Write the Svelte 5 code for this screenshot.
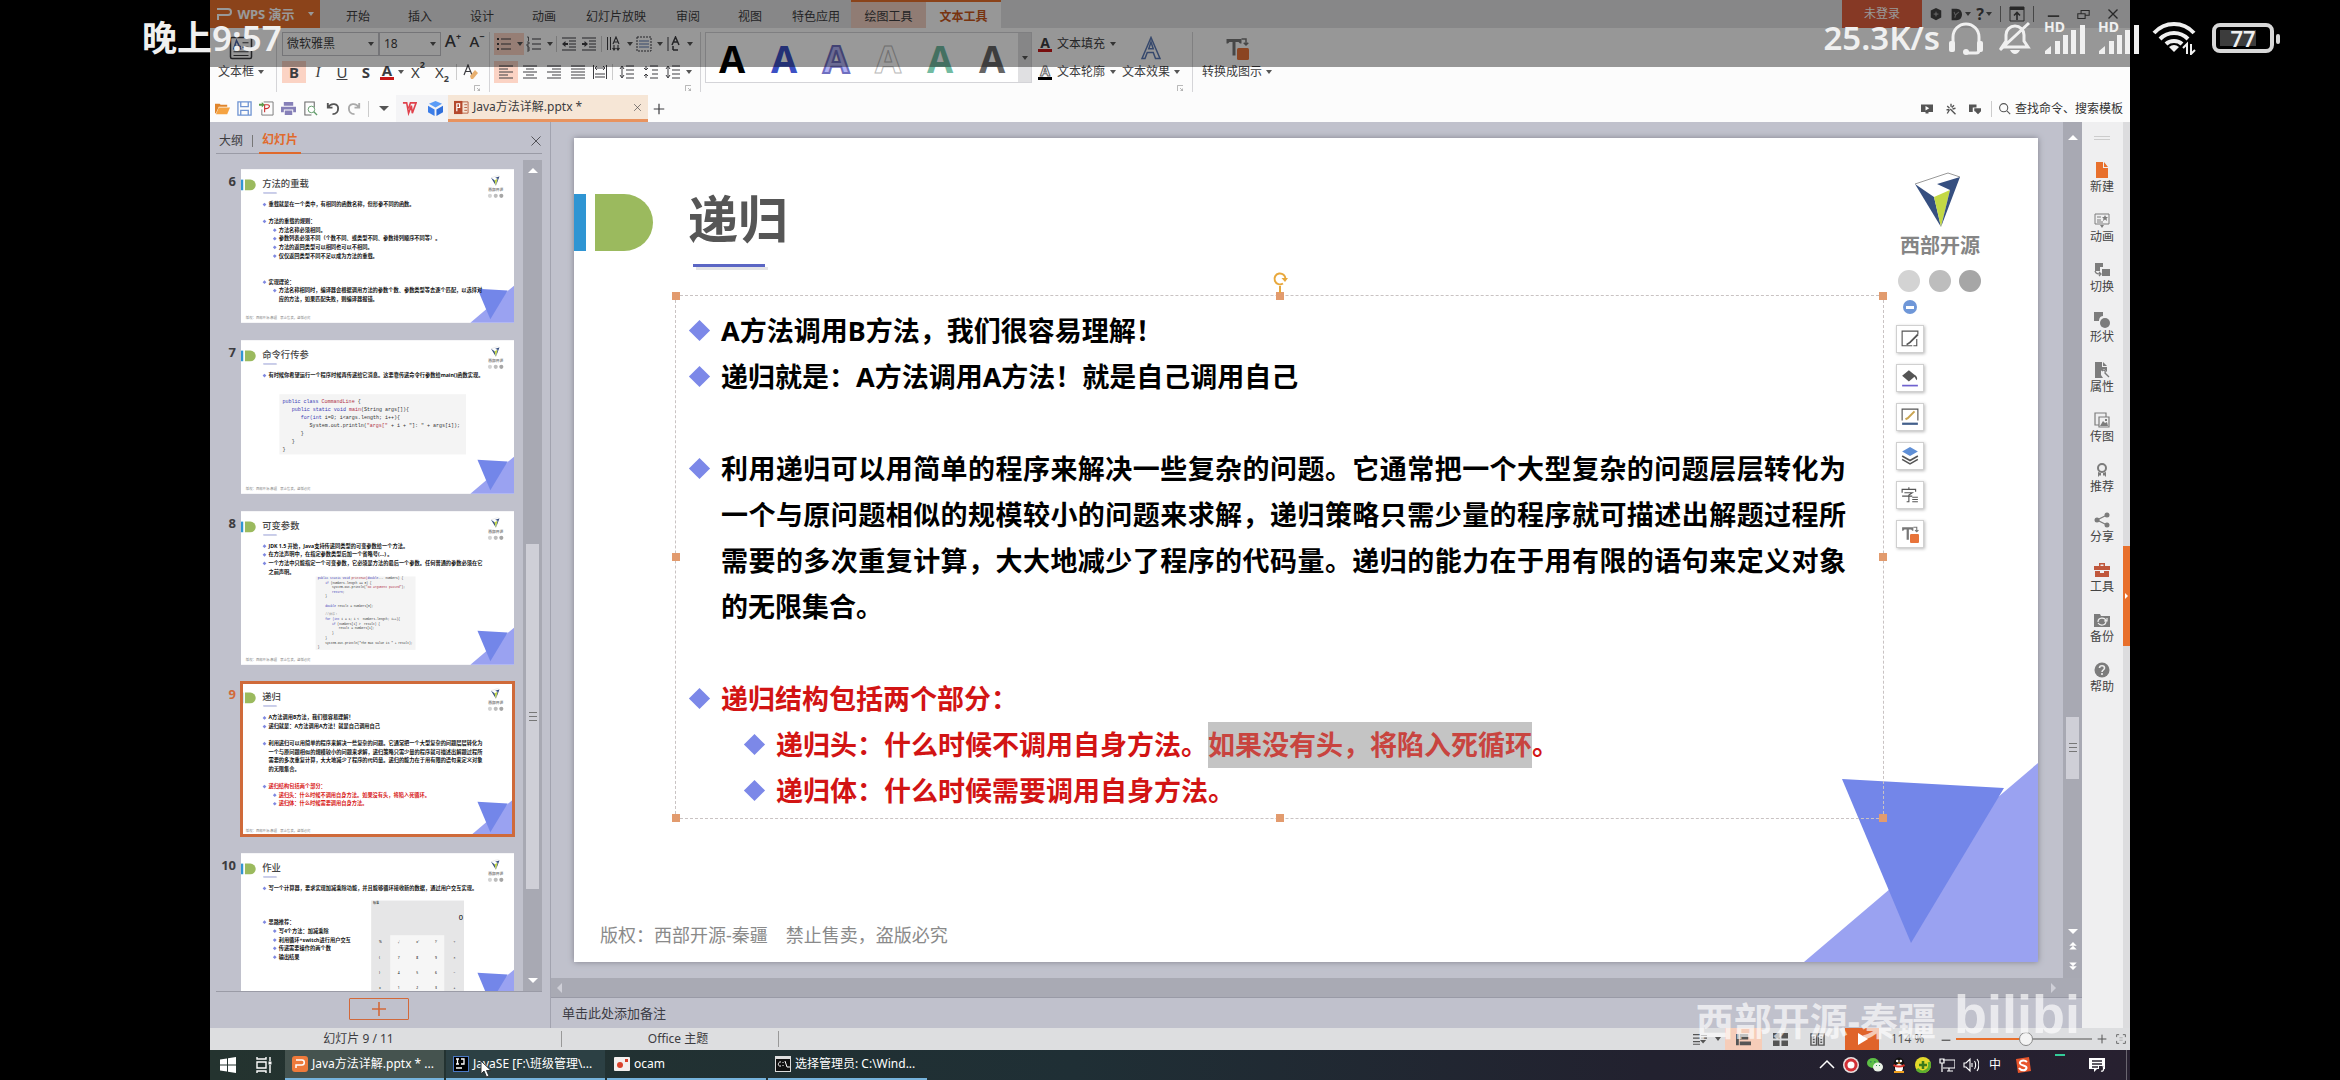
<script>
  const stroke = (d, w = 1, c = 'currentColor') =>
    `<path d="${d}" fill="none" stroke="${c}" stroke-width="${w}"/>`;
  const fill = (d, c = 'currentColor') => `<path d="${d}" fill="${c}"/>`;

  const icons = {
    textbox:
      '<rect x="1" y="1" width="14" height="14" rx="1" fill="none" stroke="currentColor"/>' +
      stroke('M8 9 5 3 3 9M4 7h4', 1, '#4a64a8') + stroke('M9 4.5h4M9 7.5h4M3 10.5h10M3 13h10', 0.7),
    bullets: fill('M1 2h2v2H1zM1 7h2v2H1zM1 12h2v2H1z') + stroke('M5 3h10M5 8h10M5 13h10'),
    numbers: stroke('M1 1h1.5v4M1 6h2v2H1v2h2M1 11h2v4H1M1 13h2', 0.8) + stroke('M6 3h9M6 8h9M6 13h9'),
    outdent: stroke('M1 2h14M8 5h7M8 8h7M8 11h7M1 14h14') + fill('M1 8l3.5-3v2H7v2H4.5v2z'),
    indent: stroke('M1 2h14M8 5h7M8 8h7M8 11h7M1 14h14') + fill('M7 8 3.500 5v2H1v2h2.500v2z'),
    textdir: stroke('M1.500 1v13M4.500 1v13') + stroke('M7 8l3-7 3 7M8 6h4M8 9v5M12 9v5M6.500 12 8 14l1.500-2M10.500 12l1.500 2 1.500-2', 1.1),
    alignbox: '<rect x="1" y="1" width="14" height="14" fill="none" stroke="currentColor" stroke-dasharray="2 1"/>' + stroke('M3 5h10M3 8h10M3 11h10', 1, '#5a78b0'),
    spacing: stroke('M2 1v14') + stroke('M6 9l3.500-8L13 9M7 6h5M7 14h5M7 10v4', 1.5),
    left: stroke('M1 2h14M1 5h9M1 8h14M1 11h9M1 14h14'),
    center: stroke('M1 2h14M4 5h8M1 8h14M4 11h8M1 14h14'),
    right: stroke('M1 2h14M6 5h9M1 8h14M6 11h9M1 14h14'),
    justify: stroke('M1 2h14M1 5h14M1 8h14M1 11h14M1 14h14'),
    distribute: stroke('M1.500 1v14M14.500 1v14M3 4h10M3 10h10M3 13h10M5 2 3 4l2 2M11 2l2 2-2 2'),
    lines: stroke('M3 3v10M1 5l2-3 2 3M1 11l2 3 2-3M7 2h8M7 6h8M7 10h8M7 14h8'),
    para: stroke('M3 2v4M1 4l2 2 2-2M3 14v-4M1 12l2-2 2 2M7 2h8M9 6h6M9 10h6M7 14h8'),
    eraser: stroke('M1 11 5 1l4 10M2.500 7.500h5', 1.2) + fill('M7 12l5-6 3 3-5 6H8z', '#e8b070'),
    launcher: stroke('M3 14V3h11M9 13h4V9M8 8l5 5'),
    effect: stroke('M2 15 8 1l6 14h-3l-1.500-4h-4L4 15zM6.500 8.500h3L8 4z', 1, '#5b79b5'),
    convert: fill('M1 2h10v3h-1l-1-1H7v9H5V4H3L2 5H1z', '#777') + stroke('M11 2h3v4M12.500 4.500 14 6l1.500-1.500', 1, '#777') + '<rect x="8" y="8" width="8" height="8" rx="1" fill="#e8743a"/>',
    folder: fill('M0 3h5l1 1h7v2H4l-3 7H0z', '#e0852c') + fill('M4 7h12l-3 7H1z', '#f5a342'),
    save: stroke('M1 1h14v14H1zM4 1v5h8V1M4 15v-5h8v5', 1.4, '#6f94d2'),
    pdf: stroke('M5 1h10v14H3V9', 1, '#777') + stroke('M6 12V4h3c4 0 2 5-3 4', 1.2, '#c33') + fill('M0 3h3V1l3 3-3 3V5H0z', '#5a9a4a'),
    print: fill('M3 1h10v4H3zM0 6h16v6h-3V9H3v3H0zM4 10h8v5H4z', '#8680b8'),
    preview: stroke('M12 7V1H2v14h7', 1.1, '#666') + '<circle cx="9" cy="9" r="3.500" fill="#fff" stroke="#5f9a68"/>' + stroke('M11.500 11.500 15 15', 1.4, '#5f9a68'),
    undo: stroke('M3 2v5h5M3 7c4-6 11-4 11 1 0 3-2 6-6 6', 2, '#555'),
    redo: stroke('M13 2v5H8M13 7C9 1 2 3 2 8c0 3 2 6 6 6', 2, '#aaa'),
    wps: stroke('M1 2h4l2 11 3-8 1 8 4-11H9L7 8', 1.7, '#e0414c'),
    cube: fill('M8 0l7 3-7 4-7-4z', '#5b9cf6') + fill('M0 5l7 4v7l-7-4z', '#3b7de8') + fill('M16 5 9 9v7l7-4z', '#2f6fdc'),
    ppt: stroke('M8 2h7v12H8M11 5h3M11 8h3M11 11h3', 1, '#b65f40') + fill('M0 1h9v14H0z', '#b5492c') + stroke('M3 12V4h3v4H3', 1.3, '#fff'),
    gear: fill('M8 1l6 3v8l-6 3-6-3V4z', '#444') + fill('M8 4.500l1 2.500 2.500 1L9 9l-1 2.500L7 9 4.500 8 7 7z', '#999'),
    docer: fill('M2 1h6c9 0 9 14 0 14H2z', '#444') + stroke('M6 12c0-4 2-5 5-7M7 10 5 5', 1.3, '#999'),
    upbox: stroke('M1 1h14v14H1z') + fill('M1 1h14v3H1z') + stroke('M8 14V7M5 9.500l3-3 3 3', 1.6),
    restore: stroke('M1 7h9v6H1zM5 7V3h10v6h-5', 1.3),
    min: stroke('M1 10h14', 2),
    close: stroke('M2 2l12 12M14 2 2 14', 1.8),
    thinclose: stroke('M2 2l12 12M14 2 2 14', 1.1),
    plus: stroke('M8 1v14M1 8h14', 1.6),
    present: fill('M0 2h16v10h-6v2H6v-2H0z') + fill('M6 4l5 3-5 3z', '#fff'),
    wand: stroke('M8 1v4M3 4l3 3M2 9h4M7 8l7 7M12 3 9 6M6 9l-3 5M10 8l4-1', 1.8),
    note: fill('M0 2h10v4H5v6H0zM7 7h9v4l-4 4-4-4H7z'),
    search: '<circle cx="7" cy="7" r="5" fill="none" stroke="currentColor" stroke-width="1.300"/>' + stroke('M11 11l4 4', 1.3),
    newfile: fill('M2 0h7v6h5v10H2zM10 0l4 5h-4z', '#e8702c'),
    anim: stroke('M1 2h14v10H1zM3 5h4M3 8h4M3 10h6') + fill('M11 3l1 2h2l-1.500 1.500L13 9l-2-1.500L9 9l.500-2.500L8 5h2zM6 13h4l-2 3z'),
    trans: fill('M1 1h8v4H6v4H1zM8 7h8v7H8z') + stroke('M1 9c1 3 3 3 6 3M5 10l2 2-2 2', 1.3),
    shape: fill('M0 0h9v4C6 4 5 7 5 9H0z') + '<circle cx="11" cy="11" r="5" fill="currentColor"/>',
    prop: fill('M1 0h7v5h5v5l-3-3-3 2v4l2 3H1zM9 0l4 4H9z') + stroke('M8 9c2-2 4 0 3 2l4 4', 1.3),
    pic: stroke('M5 13H1V1h11v4M5 5h10v10H5z', 1.2) + fill('M6 14l3-5 2 2 2-1 1 4zM11 7h2v2h-2z'),
    medal: '<circle cx="8" cy="6" r="4" fill="none" stroke="currentColor" stroke-width="2"/>' + fill('M4 10l3 1v3l-1-1-2 2zM12 10l-3 1v3l1-1 2 2z'),
    share: '<circle cx="3" cy="8" r="2.500" fill="currentColor"/><circle cx="13" cy="3" r="2.500" fill="currentColor"/><circle cx="13" cy="13" r="2.500" fill="currentColor"/>' + stroke('M13 3 3 8l10 5', 1.3),
    toolbox: fill('M5 1h6v3h5v4H0V4h5zM6.500 2.500V4h3V2.500zM1 9h5v2h4V9h5v6H1z', '#c0573c'),
    backup: fill('M0 2h6l1 2h9v11H0z') + stroke('M4 10c0-5 7-5 8-1M12 9c0 5-6 5-8 2M10 9h3V6', 1.2, '#eee'),
    help: '<circle cx="8" cy="8" r="7.500" fill="currentColor"/>' + stroke('M5.500 6c0-3 5-3 5 0 0 2-2.500 2-2.500 4M8 11v2', 1.6, '#eee'),
    pen: stroke('M10 14H1V1h14v3M14 8v6h-3') + stroke('M15 4 8 11l-3 2', 1.6),
    bucket: fill('M1 6l6-5 6 5-6 5zM12 5c2 1 3 3 2 5-1-1-1-2-2-3z') + fill('M1 14h14v1.500H1z', '#6f62cf'),
    outline: stroke('M1 11V1h14v10') + stroke('M12 3 6 9l-2 1', 1.8, '#c9a450') + fill('M1 13h14v2H1z', '#44608c'),
    layers: fill('M8 0l7 4-7 4-7-4z', '#5f8fd6') + stroke('M1 8l7 4 7-4M1 11l7 4 7-4', 1.4),
    glyphopt: stroke('M7 1v2M1 6V3h12v2M3 6h7L7 8v6H5M1 9h9M10 10h5M10 12h5M10 14h5'),
    outlineview: stroke('M0 3h8M0 7h8M0 11h8M0 14h8M9 4h7M9 7h7', 1.3) + fill('M8 9h7l-3.500 4z'),
    normal: fill('M0 2h3v12H0zM4 2h9v6H4zM4 10h12v4H4z'),
    grid: fill('M0 1h7v6H0zM9 1h7v6H9zM0 9h7v6H0zM9 9h7v6H9z'),
    book: stroke('M1 2h6v12H1zM9 2h6v12H9zM3 5h2M3 8h2M3 11h2M11 5h2M11 8h2M11 11h2', 1.5),
    play: fill('M4 2l10 6-10 6z', '#fff'),
    fit: stroke('M1 5V1h4M11 1h4v4M15 11v4h-4M5 15H1v-4M6 6h1M9 6h1M6 10h1M9 10h1', 1.3),
    windows: fill('M0 2.500 7 1.500v6H0zM8 1.300 16 0v7.500H8zM0 8.500h7v6L0 13.500zM8 8.500h8V16l-8-1.300z'),
    taskview: stroke('M1 0v2h9V0M1 5h9v6H1zM1 16v-2h9v2M14 0v4M14 8v8', 1.4) + fill('M12.500 4.500h3v3h-3z'),
    wpp: '<rect width="16" height="16" rx="3" fill="#ee7a3b"/>' + stroke('M4 12V9h6c3 0 3-5 0-5H4', 1.5, '#fff'),
    idea: '<rect x=".500" y=".500" width="15" height="15" fill="#000" stroke="#4a78c4"/>' + stroke('M3 3h3M4.500 3v5M3 8h3M8 3h3v5H8M3 12h6', 1.3, '#fff'),
    ocam: '<rect y="1" width="16" height="14" rx="1" fill="#f4f0ee"/><circle cx="6" cy="9" r="3" fill="#d9432c"/>' + fill('M11 3h3v3h-3z', '#d9432c'),
    cmd: '<rect x=".500" y=".500" width="15" height="15" fill="#111" stroke="#ddd"/>' + fill('M0 0h16v3H0z', '#ddd') + stroke('M6 6c-3-1-4 5 0 4M8 6v1M8 9v1M10 5l2 6M12 11h3', 1, '#fff'),
    chevron: stroke('M1 11l7-7 7 7', 1.5),
    rec: '<circle cx="8" cy="8" r="8" fill="#e8e0e0"/><circle cx="8" cy="8" r="6.500" fill="#d22f35"/><circle cx="8" cy="8" r="3.500" fill="#fff"/>',
    wechat: '<ellipse cx="6" cy="6" rx="6" ry="5" fill="#5dbf45"/><ellipse cx="11" cy="10" rx="5" ry="4.500" fill="#e9f2e5"/>' + fill('M3 4h1.500v1.500H3zM7 4h1.500v1.500H7zM9 8h1v1H9zM12 8h1v1h-1z', '#385'),
    qq: '<ellipse cx="8" cy="8" rx="5.500" ry="7.500" fill="#111"/><ellipse cx="8" cy="11" rx="4" ry="4" fill="#fff"/><circle cx="6.200" cy="4" r="1.300" fill="#fff"/><circle cx="9.800" cy="4" r="1.300" fill="#fff"/>' + fill('M3 7c3 2 7 2 10 0l1 2c-4 2-8 2-12 0z', '#d8342c') + fill('M3 14h10v2H3zM6 5.500h4L8 7z', '#f0a020'),
    guard: '<circle cx="8" cy="8" r="8" fill="#e3d92b"/>' + stroke('M2 12A7 7 0 0 0 14 5', 3, '#5cae2e') + stroke('M8 4v8M4 8h8', 2.5, '#3a7a1c'),
    network: stroke('M4 3h12v8H4M8 14h6M10 11v3M1 2h4v4H1zM3 6v9', 1.2),
    sound: stroke('M1 6h2l4-4v12l-4-4H1zM9 6v4M11.500 4c1.500 2 1.500 6 0 8M14 2c2.500 3 2.500 9 0 12', 1.1),
    sogou: fill('M1 2l13-2 2 14-13 2z', '#e8552b') + stroke('M12 5C9 2 4 4 5 6.500S12 8 11.500 11 6 14 4 11', 2, '#fff'),
    notice: fill('M0 1h16v11H8l-3 3v-3H0z') + stroke('M3 4h10M3 7h10M3 10h6', 1.3, '#2a2430') + fill('M10 9h5v5h-5z', '#2a2430') + stroke('M12 14c3 1 3-3 2-5', 1.3),
    pgup: fill('M8 0l6 6H2zM8 6l6 6H2z', '#fff'),
    pgdown: fill('M8 16l6-6H2zM8 10l6-6H2z', '#fff')
  };

  const tabs = [
    { t: '开始', w: 62 }, { t: '插入', w: 62 }, { t: '设计', w: 62 }, { t: '动画', w: 62 },
    { t: '幻灯片放映', w: 82 }, { t: '审阅', w: 62 }, { t: '视图', w: 62 }, { t: '特色应用', w: 70 }
  ];
  const quick = ['folder', 'save', 'pdf', 'print', 'preview', 'undo', 'redo'];
  const artStyles = ['black', 'blue', 'violet', 'hollow', 'green', 'fade'];
  const side = [
    ['newfile', '新建'], ['anim', '动画'], ['trans', '切换'], ['shape', '形状'], ['prop', '属性'],
    ['pic', '传图'], ['medal', '推荐'], ['share', '分享'], ['toolbox', '工具'], ['backup', '备份'], ['help', '帮助']
  ];
  const floating = [
    ['pen', '样式'], ['bucket', '填充'], ['outline', '轮廓'], ['layers', '叠放'], ['glyphopt', '字体'], ['convert', '转换']
  ];
  const tasks = [
    { icon: 'wpp', t: 'Java方法详解.pptx * ...', on: true },
    { icon: 'idea', t: 'JavaSE [F:\\班级管理\\...', on: true },
    { icon: 'ocam', t: 'ocam' },
    { icon: 'cmd', t: '选择管理员: C:\\Wind...' }
  ];
  const tray = ['chevron', 'rec', 'wechat', 'qq', 'guard', 'network', 'sound'];

  // Text rows are [level, y, text]; level 0 and 1 carry a bullet, 2 and 3 are continuations.
  const xOf = [147, 202, 147, 202];
  const K = '#3b3bb5';
  const R = '#b03048';
  const D = '#333';
  const slides = [
    {
      n: 6, title: '方法的重载',
      rows: [
        [0, 190, '重载就是在一个类中，有相同的函数名称，但形参不同的函数。'],
        [0, 280, '方法的重载的规则：'],
        [1, 327, '方法名称必须相同。'],
        [1, 373, '参数列表必须不同（个数不同、或类型不同、参数排列顺序不同等）。'],
        [1, 419, '方法的返回类型可以相同也可以不相同。'],
        [1, 466, '仅仅返回类型不同不足以成为方法的重载。'],
        [0, 606, '实现理论：'],
        [1, 651, '方法名称相同时，编译器会根据调用方法的参数个数、参数类型等去逐个匹配，以选择对'],
        [3, 698, '应的方法，如果匹配失败，则编译器报错。']
      ]
    },
    {
      n: 7, title: '命令行传参',
      rows: [[0, 190, '有时候你希望运行一个程序时候再传递给它消息。这要靠传递命令行参数给main()函数实现。']],
      box: [206, 290, 1001, 323], size: 27,
      code: [
        [222, 332, [[K, 'public class '], [R, 'CommandLine'], [D, ' {']]],
        [272, 374, [[K, 'public static void '], [R, 'main'], [D, '(String args[]){']]],
        [320, 417, [[K, 'for(int '], [D, 'i=0; i<args.length; i++){']]],
        [368, 460, [[D, 'System.out.println('], [R, '"args["'], [D, ' + i + "]: " + args[i]);']]],
        [320, 502, [[D, '}']]], [272, 545, [[D, '}']]], [222, 588, [[D, '}']]]
      ]
    },
    {
      n: 8, title: '可变参数',
      rows: [
        [0, 188, 'JDK 1.5 开始，Java支持传递同类型的可变参数给一个方法。'],
        [0, 234, '在方法声明中，在指定参数类型后加一个省略号(...) 。'],
        [0, 280, '一个方法中只能指定一个可变参数，它必须是方法的最后一个参数。任何普通的参数必须在它'],
        [2, 327, '之前声明。']
      ],
      box: [400, 350, 536, 394], size: 16,
      code: [
        [411, 361, [[K, 'public static void '], [R, 'printMax('], [K, 'double'], [D, '... numbers) {']]],
        [452, 384, [[K, 'if '], [D, '(numbers.length == 0) {']]],
        [488, 408, [[D, 'System.out.println('], [R, '"No argument passed"'], [D, ');']]],
        [488, 431, [[K, 'return'], [D, ';']]],
        [452, 456, [[D, '}']]],
        [452, 506, [[K, 'double '], [D, 'result = numbers[0];']]],
        [452, 554, [['#888', '//排序！']]],
        [452, 579, [[K, 'for (int '], [D, 'i = 1; i <  numbers.length; i++){']]],
        [488, 604, [[K, 'if '], [D, '(numbers[i] >  result) {']]],
        [524, 629, [[D, 'result = numbers[i];']]],
        [488, 656, [[D, '}']]], [452, 681, [[D, '}']]],
        [452, 706, [[D, 'System.out.println("The max value is " + result);']]],
        [411, 729, [[D, '}']]]
      ]
    },
    {
      n: 9, title: '递归', current: true,
      rows: [
        [0, 192, 'A方法调用B方法，我们很容易理解！'],
        [0, 238, '递归就是：A方法调用A方法！就是自己调用自己'],
        [0, 330, '利用递归可以用简单的程序来解决一些复杂的问题。它通常把一个大型复杂的问题层层转化为'],
        [2, 376, '一个与原问题相似的规模较小的问题来求解，递归策略只需少量的程序就可描述出解题过程所'],
        [2, 422, '需要的多次重复计算，大大地减少了程序的代码量。递归的能力在于用有限的语句来定义对象'],
        [2, 468, '的无限集合。'],
        [0, 560, '递归结构包括两个部分：', 1],
        [1, 606, '递归头：什么时候不调用自身方法。如果没有头，将陷入死循环。', 1],
        [1, 652, '递归体：什么时候需要调用自身方法。', 1]
      ]
    },
    {
      n: 10, title: '作业', calc: true,
      rows: [
        [0, 189, '写一个计算器，要求实现加减乘除功能，并且能够循环接收新的数据，通过用户交互实现。'],
        [0, 370, '思路推荐：'],
        [1, 418, '写4个方法：加减乘除'],
        [1, 466, '利用循环+switch进行用户交互'],
        [1, 510, '传递需要操作的两个数'],
        [1, 558, '输出结果']
      ]
    }
  ];
  const keys = ['% √ x² ⅟ ÷', '( 7 8 9 ×', ') 4 5 6 −', '± 1 2 3 +'].map((r) => r.split(' '));
  let zoom = $state(52);
</script>

{#snippet icon(name, size = 16)}
  <svg class="ic" width={size} height={size} viewBox="0 0 16 16" aria-hidden="true">{@html icons[name]}</svg>
{/snippet}

{#snippet tool(name, label, cls = '', drop = false)}
  <button class="tb {cls}" aria-label={label}>{@render icon(name, 16)}{#if drop}<i class="caret"></i>{/if}</button>
{/snippet}

{#snippet master()}
  <g>
    <rect x="0" y="56" width="12" height="57" fill="#2f95d3" />
    <path d="M21 56H50A29 28.500 0 0 1 50 113H21Z" fill="#9bba5e" />
    <rect x="122" y="129" width="72" height="3" fill="#e4e4e6" />
    <rect x="119" y="126" width="72" height="3" fill="#5b66c4" />
    <path d="M1341 46 1374 35 1386 39" fill="none" stroke="#999" />
    <path d="M1341 46 1360 59 1367 89Z" fill="#364f80" />
    <path d="M1360 59 1376 52 1367 89Z" fill="#c3d845" />
    <path d="M1363 46 1386 39 1367 89 1376 52Z" fill="#364f80" />
    <text x="1366" y="107" font-size="20" font-weight="700" fill="#858585" text-anchor="middle" dominant-baseline="central">西部开源</text>
    <circle cx="1335" cy="143" r="11" fill="#d3d3d3" />
    <circle cx="1366" cy="143" r="11" fill="#bdbdbd" />
    <circle cx="1396" cy="143" r="11" fill="#a6a6a6" />
    <path d="M1230 824 1464 625V824Z" fill="#9aa2f1" />
    <path d="M1268 641 1430 650 1337 805Z" fill="#7386e9" />
  </g>
{/snippet}

<div class="phone">
  <main class="screen">
    <header class="tabs">
      <button class="brand"><svg width="16" height="14" viewBox="0 0 16 14" aria-hidden="true"><path d="M1 2h11q3 0 3 3t-3 3H2v5" fill="none" stroke="#fff" stroke-width="2" /></svg>WPS 演示<i class="caret light"></i></button>
      <nav>
        {#each tabs as t}
          <button style:width="{t.w}px">{t.t}</button>
        {/each}
        <button class="ctx">绘图工具</button>
        <button class="ctx active">文本工具</button>
      </nav>
      <button class="login">未登录</button>
      <div class="win">
        <button aria-label="设置">{@render icon('gear', 14)}</button>
        <button aria-label="稻壳">{@render icon('docer', 13)}<i class="caret"></i></button>
        <button class="q">?<i class="caret"></i></button>
        <i class="sep"></i>
        <button aria-label="收起功能区">{@render icon('upbox', 16)}</button>
        <i class="sep"></i>
        <button aria-label="最小化">{@render icon('min', 13)}</button>
        <button aria-label="还原">{@render icon('restore', 13)}</button>
        <button aria-label="关闭">{@render icon('close', 12)}</button>
      </div>
    </header>

    <section class="ribbon">
      <div class="group first">
        <button class="big">{@render icon('textbox', 24)}<span>文本框<i class="caret"></i></span></button>
      </div>
      <div class="group font">
        <div class="row">
          <label class="combo wide"><select aria-label="字体"><option>微软雅黑</option></select><i class="caret"></i></label>
          <label class="combo"><select aria-label="字号"><option>18</option></select><i class="caret"></i></label>
          <button class="tb grow">A<sup>+</sup></button>
          <button class="tb grow small">A<sup>−</sup></button>
        </div>
        <div class="row letters">
          <button class="tb on"><b>B</b></button>
          <button class="tb"><em>I</em></button>
          <button class="tb"><u>U</u></button>
          <button class="tb"><b>S</b></button>
          <button class="tb colour"><b>A</b><i class="caret"></i></button>
          <button class="tb">X<sup>2</sup></button>
          <button class="tb">X<sub>2</sub></button>
          <i class="sep"></i>
          {@render tool('eraser', '清除格式')}
        </div>
        <button class="launch" aria-label="字体设置">{@render icon('launcher', 8)}</button>
      </div>
      <div class="group para">
        <div class="row">
          {@render tool('bullets', '项目符号', 'on drop', true)}
          {@render tool('numbers', '编号', 'drop', true)}
          <i class="sep"></i>
          {@render tool('outdent', '减少缩进', 'slim')}
          {@render tool('indent', '增加缩进', 'slim')}
          <i class="sep"></i>
          {@render tool('textdir', '文字方向', 'drop', true)}
          {@render tool('alignbox', '对齐文本', 'drop', true)}
          {@render tool('spacing', '字符间距', 'drop', true)}
        </div>
        <div class="row">
          {@render tool('left', '左对齐', 'on')}
          {@render tool('center', '居中')}
          {@render tool('right', '右对齐')}
          {@render tool('justify', '两端对齐')}
          {@render tool('distribute', '分散对齐', 'slim')}
          <i class="sep"></i>
          {@render tool('lines', '行距')}
          {@render tool('para', '段落间距')}
          {@render tool('lines', '段落行距', 'drop', true)}
        </div>
        <button class="launch" aria-label="段落设置">{@render icon('launcher', 8)}</button>
      </div>
      <div class="gallery">
        {#each artStyles as s}
          <button class="art {s}">A</button>
        {/each}
        <button class="more" aria-label="更多样式"><i class="caret"></i></button>
      </div>
      <div class="group textfx">
        <div class="col">
          <button class="lab"><b class="ink red">A</b>文本填充<i class="caret"></i></button>
          <button class="lab"><b class="ink line">A</b>文本轮廓<i class="caret"></i></button>
        </div>
        <button class="big">{@render icon('effect', 24)}<span>文本效果<i class="caret"></i></span></button>
        <button class="launch" aria-label="效果设置">{@render icon('launcher', 8)}</button>
      </div>
      <button class="big convert">{@render icon('convert', 24)}<span>转换成图示<i class="caret"></i></span></button>
    </section>

    <section class="quick">
      {#each quick as q}
        <button aria-label={q}>{@render icon(q, 15)}</button>
      {/each}
      <i class="sep"></i>
      <button aria-label="更多"><i class="caret big-caret"></i></button>
      <button class="home" aria-label="WPS">{@render icon('wps', 15)}</button>
      <button class="home" aria-label="稻壳模板">{@render icon('cube', 15)}</button>
      <div class="doc">{@render icon('ppt', 15)}<span>Java方法详解.pptx *</span><button aria-label="关闭文档">{@render icon('thinclose', 9)}</button></div>
      <button aria-label="新建文档">{@render icon('plus', 12)}</button>
      <div class="find">
        <button aria-label="放映">{@render icon('present', 12)}</button>
        <button aria-label="美化">{@render icon('wand', 12)}</button>
        <button aria-label="批注">{@render icon('note', 12)}</button>
        <i class="sep"></i>
        {@render icon('search', 13)}
        <input aria-label="查找命令、搜索模板" placeholder="查找命令、搜索模板" />
      </div>
    </section>

    <div class="work">
      <aside class="panel">
        <div class="ptabs"><button>大纲</button><i class="sep"></i><button class="cur">幻灯片</button><button class="x" aria-label="关闭窗格">{@render icon('thinclose', 12)}</button></div>
        <div class="list">
          <ol>
            {#each slides as s}
              <li class:current={s.current}>
                <span class="num">{s.n}</span>
                <svg class="thumb" viewBox="0 0 1464 824" role="img" aria-label={s.title}>
                  <rect width="1464" height="824" fill="#fff" />
                  {@render master()}
                  <text x="114" y="78" font-size="50" font-weight="500" fill="#444" dominant-baseline="central">{s.title}</text>
                  {#if s.box}
                    <rect x={s.box[0]} y={s.box[1]} width={s.box[2]} height={s.box[3]} fill="#f4f4f4" />
                    {#each s.code as c}
                      <text class="mono" x={c[0]} y={c[1]} font-size={s.size} dominant-baseline="central">{#each c[2] as p}<tspan fill={p[0]}>{p[1]}</tspan>{/each}</text>
                    {/each}
                  {/if}
                  {#if s.calc}
                    <rect x="698" y="254" width="498" height="570" fill="#e6e6e7" />
                    <rect x="800" y="440" width="290" height="384" fill="#f6f6f6" />
                    <text x="708" y="268" font-size="16" dominant-baseline="central">标准</text>
                    <text x="1168" y="340" font-size="40" dominant-baseline="central">0</text>
                    {#each keys as r, i}
                      {#each r as k, j}
                        <text x={740 + j * 100} y={476 + i * 82} font-size="18" dominant-baseline="central">{k}</text>
                      {/each}
                    {/each}
                  {/if}
                  {#each s.rows as r}
                    {#if r[0] < 2}<path d="M{xOf[r[0]] - 31} {r[1]}l10-10 10 10-10 10z" fill="#7f88e0" />{/if}
                    <text x={xOf[r[0]]} y={r[1] - 3} font-size="28" font-weight="700" fill={r[3] ? '#d81818' : '#111'} dominant-baseline="central">{r[2]}</text>
                  {/each}
                  {#if !s.calc}<text x="26" y="797" font-size="18" fill="#888" dominant-baseline="central">版权：西部开源-秦疆　禁止售卖，盗版必究</text>{/if}
                </svg>
              </li>
            {/each}
          </ol>
          <div class="vbar"><i class="up"></i><div class="thumbbar list-thumb"><i class="ridge"></i></div><i class="down"></i></div>
        </div>
        <div class="add"><button aria-label="新建幻灯片">{@render icon('plus', 16)}</button></div>
      </aside>

      <section class="editor">
        <div class="stage">
          <div class="canvas">
            <article class="slide">
              <svg class="bg" viewBox="0 0 1464 824" preserveAspectRatio="none" aria-hidden="true">{@render master()}</svg>
              <h1>递归</h1>
              <div class="box">
                <p>A方法调用B方法，我们很容易理解！</p>
                <p>递归就是：A方法调用A方法！就是自己调用自己</p>
                <p class="blank"></p>
                <p class="full">利用递归可以用简单的程序来解决一些复杂的问题。它通常把一个大型复杂的问题层层转化为一个与原问题相似的规模较小的问题来求解，递归策略只需少量的程序就可描述出解题过程所需要的多次重复计算，大大地减少了程序的代码量。递归的能力在于用有限的语句来定义对象的无限集合。</p>
                <p class="blank"></p>
                <p class="red">递归结构包括两个部分：</p>
                <p class="red sub">递归头：什么时候不调用自身方法。<mark>如果没有头，将陷入死循环</mark>。</p>
                <p class="red sub">递归体：什么时候需要调用自身方法。</p>
                {#each ['tl', 'tc', 'tr', 'ml', 'mr', 'bl', 'bc', 'br'] as h}<i class="handle {h}"></i>{/each}
                <svg class="rotate" width="16" height="22" viewBox="0 0 16 22" aria-hidden="true"><path d="M8 22v-7M11 12.500a5.500 5.500 0 1 1 2.500-4.500" fill="none" stroke="#e8a83c" stroke-width="2" /><path d="M9.500 7H16l-3 4z" fill="#e8a83c" /></svg>
              </div>
              <footer>版权：西部开源-秦疆　禁止售卖，盗版必究</footer>
              <div class="float">
                <button class="minus" aria-label="收起"></button>
                {#each floating as f}<button class="fb" aria-label={f[1]}>{@render icon(f[0], 18)}</button>{/each}
              </div>
            </article>
          </div>
          <div class="vbar main"><i class="up"></i><div class="thumbbar main-thumb"><i class="ridge"></i></div><div class="steps"><i class="down"></i>{@render icon('pgup', 10)}{@render icon('pgdown', 10)}</div></div>
        </div>
        <div class="hbar"><i class="lt"></i><i class="rt"></i></div>
        <input class="notes" aria-label="备注" placeholder="单击此处添加备注" />
      </section>

      <aside class="side">
        <i class="grip"></i>
        {#each side as s}
          <button>{@render icon(s[0], 16)}<span>{s[1]}</span></button>
        {/each}
        <div class="rail"><button aria-label="展开"><i></i></button></div>
      </aside>
    </div>

    <footer class="status">
      <span class="page">幻灯片 9 / 11</span><i class="sep"></i>
      <span class="theme">Office 主题</span><i class="sep"></i>
      <div class="views">
        <button aria-label="备注视图">{@render icon('outlineview', 14)}<i class="caret"></i></button>
        <button class="on" aria-label="普通视图">{@render icon('normal', 15)}</button>
        <button aria-label="浏览视图">{@render icon('grid', 15)}</button>
        <button aria-label="阅读视图">{@render icon('book', 15)}</button>
        <button class="play" aria-label="放映">{@render icon('play', 16)}</button>
        <span class="pct">114 %</span>
        <button class="sm" aria-label="缩小">{@render icon('min', 10)}</button>
        <input type="range" aria-label="缩放" min="0" max="100" bind:value={zoom} />
        <button class="sm" aria-label="放大">{@render icon('plus', 10)}</button>
        <button class="sm last" aria-label="适应窗口">{@render icon('fit', 10)}</button>
      </div>
      <div class="mark"><span>西部开源-秦疆</span><b>bilibili</b></div>
    </footer>

    <footer class="taskbar">
      <button class="start" aria-label="开始">{@render icon('windows', 16)}</button>
      <button class="start" aria-label="任务视图">{@render icon('taskview', 16)}</button>
      {#each tasks as t}
        <button class="task" class:on={t.on}>{@render icon(t.icon, 16)}<span>{t.t}</span></button>
      {/each}
      <div class="tray">
        {#each tray as t}<button aria-label={t}>{@render icon(t, 16)}</button>{/each}
        <button class="ime">中</button>
        <button class="wide" aria-label="输入法">{@render icon('sogou', 16)}</button>
        <i class="dash"></i>
        <button class="wide" aria-label="通知">{@render icon('notice', 16)}</button>
      </div>
      <svg class="cursor" width="12" height="18" viewBox="0 0 12 18" aria-hidden="true"><path d="M1 1v13l3-3 2.500 6 2.500-1-2.500-5.500H11z" fill="#fff" stroke="#333" /></svg>
    </footer>
  </main>

  <div class="device">
    <time>晚上9:57</time>
    <div class="signals">
      <span>25.3K/s</span>
      <svg width="36" height="34" viewBox="0 0 36 34" aria-hidden="true"><path d="M5 27V16a13 13 0 0 1 26 0v13q0 3-3 3H19" fill="none" stroke="currentColor" stroke-width="3" /><rect x="1" y="20" width="6" height="11" rx="2" fill="currentColor" /><rect x="29" y="20" width="6" height="11" rx="2" fill="currentColor" /><circle cx="18" cy="31" r="3" fill="currentColor" /></svg>
      <svg width="34" height="34" viewBox="0 0 34 34" aria-hidden="true"><path d="M4 26h26l-4-6v-6c0-5-4-9-9-9s-9 4-9 9v6zM31 2 2 29" fill="none" stroke="currentColor" stroke-width="3" /><path d="M12 29h10q-2 4-5 4t-5-4z" fill="currentColor" /></svg>
      {#each [1, 2] as n}
        <div class="cell"><small>HD</small><svg width="42" height="30" viewBox="0 0 42 30" aria-hidden="true"><path d="M1 30v-3l6-5v8zM11 17h5v13h-5zM19 11h5v19h-5zM27 6h5v24h-5zM36 1h5v29h-5z" fill="currentColor" /></svg></div>
      {/each}
      <svg width="44" height="34" viewBox="0 0 44 34" aria-hidden="true"><path d="M2 12c11-12 29-12 40 0M8 18c8-8 20-8 28 0M14 23c4-4 12-4 16 0" fill="none" stroke="currentColor" stroke-width="4" /><path d="M22 31l-5-5q5-4 10 0z" fill="currentColor" /><path d="M35 33V23l-4 4M39 23v10l4-4" fill="none" stroke="currentColor" stroke-width="2" /></svg>
      <div class="battery"><span>77</span></div>
    </div>
  </div>
</div>

<style>
  :global(body) { background: #000; }
  .phone, .phone * { box-sizing: border-box; }
  .phone {
    position: relative; display: flex; min-height: 100vh; padding: 0 210px; overflow: hidden; background: #000;
    font: 12px/16px "Noto Sans", "Noto Sans CJK SC", sans-serif; color: #3c3c40;
  }
  .screen { flex: 1; min-width: 0; display: flex; flex-direction: column; height: 100vh; background: #fcfcfc; }
  button { border: 0; padding: 0; background: none; font: inherit; color: inherit; display: flex; align-items: center; justify-content: center; white-space: nowrap; }
  input, select { font: inherit; color: inherit; border: 0; background: none; padding: 0; min-width: 0; }
  .ic { display: block; flex: none; }
  .caret { display: inline-block; flex: none; border: 3px solid transparent; border-top: 4px solid #555; border-bottom: 0; vertical-align: middle; }
  .caret.light { border-top-color: #fff; }
  .sep { flex: none; width: 1px; height: 16px; margin: 0 2px; background: #ccc; }

  .tabs { display: flex; height: 28px; background: #e2e2e3; }
  .brand { width: 110px; gap: 5px; background: #e8702c; color: #fff; font-weight: 700; font-size: 13px; }
  .brand .caret { margin-left: 8px; }
  .tabs nav { display: flex; flex: 1; padding-left: 7px; }
  .tabs nav button { padding-top: 5px; }
  .tabs nav .ctx { width: 75px; border-top: 2px solid #e8702c; background: #f0cfc2; padding-top: 3px; }
  .tabs nav .active { background: #fcfcfc; color: #c8581c; font-weight: 700; }
  .login { width: 80px; background: #e0603e; color: #fff; }
  .win { display: flex; align-items: center; width: 208px; padding-left: 2px; color: #444; }
  .win button { width: 24px; gap: 2px; }
  .win button:nth-last-child(-n + 3) { width: 30px; }
  .win .q { font-size: 16px; font-weight: 700; }
  .win .sep { background: #777; margin: 0 4px; }

  .ribbon { display: flex; height: 67px; padding-top: 4px; }
  .group { position: relative; height: 60px; border-right: 1px solid #d5d5d8; }
  .row { display: flex; align-items: center; height: 24px; margin-bottom: 4px; }
  .first { width: 67px; }
  .big { flex-direction: column; height: 52px; gap: 4px; padding-top: 4px; justify-content: flex-start; }
  .first .big { width: 62px; }
  .big span { display: flex; align-items: center; gap: 4px; }
  .font { width: 213px; padding-left: 5px; }
  .para { width: 211px; padding-left: 4px; }
  .combo { display: flex; align-items: center; width: 62px; height: 24px; border: 1px solid #c4c4c8; padding: 0 4px; }
  .combo.wide { width: 97px; }
  .combo select { flex: 1; appearance: none; }
  .tb { flex: none; width: 24px; height: 22px; }
  .tb.slim { width: 20px; }
  .tb.drop { width: 30px; gap: 5px; }
  .tb.on { background: #fbd3c4; }
  .grow { font-size: 17px; font-weight: 500; align-items: baseline; }
  .grow.small { font-size: 15px; }
  .tb sup, .tb sub { font-size: 9px; line-height: 8px; font-weight: 700; }
  .tb sup { align-self: flex-start; }
  .tb sub { align-self: flex-end; }
  .letters { font-size: 15px; }
  .letters em { font-family: "Liberation Serif", serif; }
  .colour { width: 28px; gap: 4px; }
  .colour b, .ink { border-bottom: 3px solid #c81818; width: 14px; line-height: 13px; text-align: center; }
  .launch { position: absolute; right: 8px; bottom: 0; color: #777; }
  .gallery { display: flex; height: 51px; margin: 0 6px 0 4px; border: 1px solid #d4d4d8; background: #fff; }
  .art { width: 52px; font: 700 38px/48px "Open Sans", sans-serif; color: #000; }
  .blue { color: #3c50c4; }
  .violet { color: #b3b3f5; -webkit-text-stroke: 2px #6f6fc0; }
  .hollow { color: #fff; -webkit-text-stroke: 1px #bbb; }
  .green { color: #72bba2; }
  .fade { color: #666; }
  .more { width: 13px; background: #e0e0e2; }
  .textfx { display: flex; width: 155px; }
  .col { display: flex; flex-direction: column; gap: 4px; }
  .lab { height: 24px; gap: 5px; }
  .ink { font-size: 14px; }
  .ink.line { border-color: #000; color: #fff; -webkit-text-stroke: 1px #666; }
  .textfx .big { margin-left: 6px; }
  .convert { margin-left: 9px; }

  .quick { display: flex; align-items: center; height: 27px; padding-left: 1px; }
  .quick > button { width: 22px; }
  .quick > .sep { margin: 0 2px 0 3px; }
  .quick > .home { width: 26px; height: 27px; background: #f4f4f6; }
  .big-caret { border-width: 5px 5px 0; }
  .quick > .sep + button { width: 25px; }
  .doc { display: flex; align-items: center; width: 200px; height: 27px; padding: 0 6px; gap: 4px; background: #f6e6d6; border-bottom: 3px solid #e8935f; }
  .doc span { flex: 1; }
  .find { display: flex; align-items: center; margin-left: auto; width: 213px; gap: 4px; color: #555; }
  .find button { width: 20px; }
  .find input { flex: 1; color: #333; }
  .find input::placeholder { color: #333; opacity: 1; }

  .work { flex: 1; display: flex; min-height: 0; background: #c0c1cc; }
  .panel { display: flex; flex-direction: column; width: 341px; border-right: 1px solid #a2a3af; }
  .ptabs { display: flex; align-items: center; height: 32px; margin: 0 8px 6px 6px; border-bottom: 1px solid #9a9ba6; font-size: 12px; padding-top: 6px; }
  .ptabs button { height: 26px; padding: 0 3px; }
  .ptabs .sep { background: #777; margin: 0 6px; height: 12px; }
  .ptabs .cur { color: #e06a2c; border-bottom: 2px solid #e06a2c; font-weight: 700; }
  .ptabs .x { margin-left: auto; padding: 0; }
  .list { flex: 1; display: flex; min-height: 0; margin-left: 6px; margin-right: 8px; border-bottom: 1px solid #9a9ba6; }
  ol { flex: 1; overflow: hidden; list-style: none; margin: 0; padding: 9px 0 0; }
  li { display: flex; height: 171px; }
  .num { width: 25px; padding-right: 5px; text-align: right; font-weight: 700; font-size: 13px; line-height: 24px; }
  .thumb { display: block; width: 273px; height: 154px; }
  .thumb text { white-space: pre; }
  .thumb .mono { font-family: "Liberation Mono", monospace; }
  .current .num { color: #d2693a; }
  .current .thumb { outline: 3px solid #cf6a3a; outline-offset: -2px; }
  .vbar { display: flex; flex-direction: column; align-items: center; width: 19px; background: #a8a9b3; padding: 8px 0; }
  .up, .down { flex: none; border: 5px solid transparent; border-top: 0; border-bottom: 5px solid #fff; }
  .down { border-top: 5px solid #fff; border-bottom: 0; }
  .thumbbar { display: flex; align-items: center; justify-content: center; width: 13px; background: #cfcfd7; }
  .ridge { width: 8px; height: 9px; background: repeating-linear-gradient(#777 0 1px, transparent 1px 4px); }
  .list-thumb { flex: 344 0 0; order: 2; }
  .list .vbar::before { content: ""; order: 1; flex: 371 0 0; }
  .list .vbar::after { content: ""; order: 3; flex: 89 0 0; }
  .list .up { order: 0; }
  .list .down { order: 4; }
  .add { display: flex; justify-content: center; height: 36px; padding: 6px 0 8px; }
  .add button { width: 60px; border: 1px solid #d2693a; color: #d2693a; border-radius: 1px; margin-right: 2px; }

  .editor { flex: 1; min-width: 0; display: flex; flex-direction: column; }
  .stage { flex: 1; display: flex; min-height: 0; }
  .canvas { flex: 1; display: flex; padding: 16px 25px 16px 23px; min-width: 0; }
  .slide { position: relative; flex: 1; display: flex; flex-direction: column; padding: 45px 154px 15px 101px; background: #fff; box-shadow: 0 0 6px #7f808c; }
  .bg { position: absolute; inset: 0; width: 100%; height: 100%; }
  h1 { position: relative; margin: 0 0 40px 13px; font-size: 50px; line-height: 72px; font-weight: 700; color: #565656; }
  .box { position: relative; padding: 12px 37px 4px 45px; border: 1px dashed #c9c3c3; font-size: 27px; line-height: 46px; font-weight: 700; color: #000; }
  .box p { position: relative; margin: 0; min-height: 46px; }
  .box p:not(.blank)::before { content: ""; position: absolute; left: -29px; top: 15px; width: 15px; height: 15px; background: #7c88e8; transform: rotate(45deg); }
  .full { text-align: justify; line-break: anywhere; }
  .box .red { color: #d21414; }
  .box .sub { margin-left: 55px; }
  mark { display: inline-block; vertical-align: top; background: #c4c4c4; color: #c8443f; }
  .handle { position: absolute; width: 8px; height: 8px; background: #e29b6e; }
  .tl, .tc, .tr { top: -4px; }
  .ml, .mr { top: calc(50% - 4px); }
  .bl, .bc, .br { bottom: -4px; }
  .tl, .ml, .bl { left: -4px; }
  .tc, .bc { left: calc(50% - 4px); }
  .tr, .mr, .br { right: -4px; }
  .rotate { position: absolute; left: calc(50% - 8px); top: -25px; }
  .slide footer { position: relative; margin: auto 0 0 -75px; font-size: 18px; line-height: 24px; color: #8a8a8a; }
  .float { position: absolute; right: 114px; top: 162px; display: flex; flex-direction: column; align-items: center; gap: 11px; color: #555; }
  .minus { width: 14px; height: 14px; border-radius: 50%; background: linear-gradient(#fff, #fff) center / 8px 3px no-repeat #6f97d8; }
  .fb { width: 28px; height: 28px; background: #fff; border: 1px solid #d0d0d0; box-shadow: 1px 1px 3px #bbb; }
  .main { padding-top: 13px; }
  .main-thumb { flex: 62 0 0; order: 2; }
  .main::before { content: ""; order: 1; flex: 570 0 0; }
  .main::after { content: ""; order: 3; flex: 148 0 0; }
  .steps { order: 4; display: flex; flex-direction: column; align-items: center; gap: 8px; }
  .hbar { display: flex; justify-content: space-between; align-items: center; height: 20px; padding: 0 26px 0 6px; background: #a9aab4; border-bottom: 1px solid #999aa6; }
  .lt, .rt { border: 5px solid transparent; border-right-color: #cfcfd7; border-left: 0; }
  .rt { border-left: 5px solid #cfcfd7; border-right: 0; }
  .notes { height: 30px; padding-left: 11px; font-size: 13px; }
  .notes::placeholder { color: #3c3c44; opacity: 1; }

  .side { position: relative; display: flex; flex-direction: column; width: 48px; padding: 14px 8px 0 0; background: #efeff0; color: #7c7c7c; }
  .grip { align-self: center; width: 16px; height: 4px; border: 1px solid #ccc; border-width: 1px 0; margin-bottom: 15px; }
  .side > button { flex-direction: column; height: 50px; justify-content: center; gap: 1px; padding-bottom: 4px; }
  .side > button span { color: #444; }
  .rail { position: absolute; inset: 0 0 0 auto; width: 7px; background: #dcdcde; }
  .rail button { width: 7px; height: 100px; margin-top: 424px; background: #e8702c; }
  .rail i { border: 3px solid transparent; border-left-color: #fff; border-right: 0; }

  .status { position: relative; display: flex; align-items: center; height: 22px; background: #dddee0; }
  .page { width: 349px; text-align: center; padding: 0 56px 0 4px; }
  .page + .sep { margin-right: 0; background: #999; }
  .theme { width: 214px; text-align: center; padding-left: 18px; }
  .theme + .sep { background: #999; }
  .views { margin-left: auto; display: flex; align-items: center; height: 22px; color: #555; }
  .views button { width: 37px; height: 22px; gap: 8px; }
  .views .on { background: #f6cdb9; }
  .views .play { width: 34px; background: #e0642a; margin-left: 9px; }
  .pct { width: 57px; text-align: center; }
  .views .sm { width: 20px; }
  .views .last { width: 18px; }
  .views input { appearance: none; width: 136px; height: 14px; background: linear-gradient(90deg, #e8702c 50%, #999 50%) center / 100% 2px no-repeat; margin: 0; }
  .views input::-webkit-slider-thumb { appearance: none; width: 14px; height: 14px; border-radius: 50%; background: #f4f4f4; border: 1px solid #888; }
  .mark { position: absolute; right: 48px; bottom: 8px; display: flex; align-items: flex-end; gap: 18px; color: #fff; opacity: 0.65; pointer-events: none; }
  .mark span { font-size: 38px; line-height: 44px; font-weight: 700; }
  .mark b { width: 128px; overflow: hidden; font: 700 54px/56px "Liberation Sans", sans-serif; }

  .taskbar { position: relative; display: flex; height: 30px; background: linear-gradient(90deg, #24332f, #1f2f35 45%, #22212f 75%, #272030); color: #fff; }
  .start { width: 36px; }
  .task { justify-content: flex-start; width: 159px; margin-left: 2px; padding-left: 7px; gap: 4px; border-bottom: 2px solid #76b3dc; }
  .task.on { background: #45534f; }
  .task.on + .on { background: #2c4044; }
  .start + .task { margin-left: 3px; }
  .tray { display: flex; align-items: center; margin-left: auto; padding-right: 13px; border-right: 1px solid #6a6670; margin-right: 3px; }
  .tray button { width: 24px; }
  .tray .wide { width: 32px; }
  .dash { width: 10px; height: 2px; background: #3c9; margin: 0 16px 20px; }
  .cursor { position: absolute; left: 270px; top: 10px; }

  .device { position: absolute; inset: 0 0 auto; display: flex; justify-content: space-between; align-items: center; height: 67px; padding: 9px 66px 0 142px; color: #f0f0f0; background: rgba(0, 0, 0, 0.4); font-weight: 500; }
  time { font-size: 35px; line-height: 40px; font-weight: 600; }
  .signals { display: flex; align-items: center; gap: 12px; font: 600 33px/40px "Noto Sans", sans-serif; }
  .signals > span { margin-right: -4px; }
  .signals > :nth-child(2) { margin-right: 2px; }
  .cell { position: relative; display: flex; width: 42px; padding-top: 1px; }
  .cell small { position: absolute; left: 0; top: -3px; font-size: 14px; line-height: 14px; font-weight: 700; }
  .battery { position: relative; width: 62px; height: 30px; margin-left: 4px; border: 4px solid #d8d8d8; border-radius: 8px; font-size: 22px; line-height: 22px; text-align: center; background: linear-gradient(#3c3c3c, #3c3c3c) 4px 3px / 36px 16px no-repeat; }
  .battery::after { content: ""; position: absolute; right: -10px; top: 7px; width: 4px; height: 10px; border-radius: 2px; background: #d8d8d8; }
</style>
